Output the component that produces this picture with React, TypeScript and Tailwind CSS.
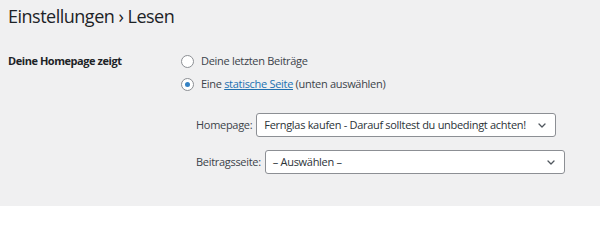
import React from "react";

function Chevron() {
  return (
    <svg width="8" height="5" viewBox="0 0 8 5" className="shrink-0">
      <path d="M1 1 L4 4 L7 1" fill="none" stroke="#50575e" strokeWidth="1.3" strokeLinecap="round" strokeLinejoin="round" />
    </svg>
  );
}

function Radio({ checked }: { checked?: boolean }) {
  return (
    <span className="w-[13px] h-[13px] rounded-full border border-[#8c8f94] bg-white flex items-center justify-center shrink-0">
      {checked && <span className="w-[5px] h-[5px] rounded-full bg-[#3582c4]" />}
    </span>
  );
}

export default function App() {
  return (
    <div className="w-[600px] h-[206px] bg-[#f0f0f1] overflow-hidden text-[#3c434a]" style={{ fontFamily: '"Open Sans", "Noto Sans", sans-serif' }}>
      <div className="pl-[8px] pt-[3px]">
        <h1 className="text-[18px] leading-[26px] tracking-[-0.5px] text-[#1d2327] font-normal">Einstellungen › Lesen</h1>
        <div className="flex mt-[22px]">
          <div className="w-[173px] text-[11px] leading-[16px] font-bold tracking-[-0.45px] text-[#1d2327] pt-[2px]">Deine Homepage zeigt</div>
          <div className="flex flex-col text-[11px] tracking-[-0.3px]">
            <div className="flex items-center gap-[7px] h-[18px] mt-[1px]">
              <Radio />
              <span>Deine letzten Beiträge</span>
            </div>
            <div className="flex items-center gap-[7px] h-[18px] mt-[5px]">
              <Radio checked />
              <span>
                Eine <span className="text-[#2271b1] underline">statische Seite</span> (unten auswählen)
              </span>
            </div>
            <div className="flex flex-col pl-[15px] mt-[20px] gap-[13px]">
              <div className="flex items-center gap-[4px]">
                <span className="whitespace-nowrap">Homepage:</span>
                <div className="w-[300px] h-[24px] bg-white border border-[#8c8f94] rounded-[3px] flex items-center justify-between pl-[7px] pr-[9px] text-[#2c3338] whitespace-nowrap">
                  <span>Fernglas kaufen - Darauf solltest du unbedingt achten!</span>
                  <Chevron />
                </div>
              </div>
              <div className="flex items-center gap-[4px]">
                <span className="whitespace-nowrap">Beitragsseite:</span>
                <div className="w-[300px] h-[24px] bg-white border border-[#8c8f94] rounded-[3px] flex items-center justify-between pl-[7px] pr-[9px] text-[#2c3338] whitespace-nowrap">
                  <span>– Auswählen –</span>
                  <Chevron />
                </div>
              </div>
            </div>
          </div>
        </div>
      </div>
    </div>
  );
}
